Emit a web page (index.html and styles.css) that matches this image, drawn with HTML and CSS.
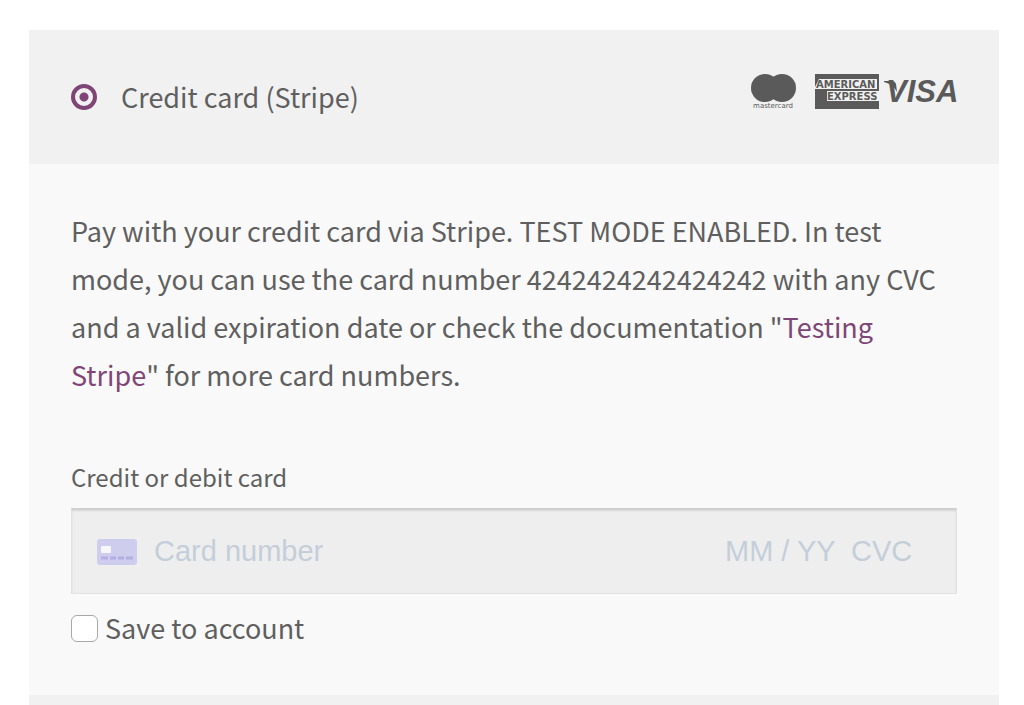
FILE: index.html
```
<!DOCTYPE html>
<html lang="en">
<head>
    <meta charset="UTF-8">
    <meta name="viewport" content="width=device-width, initial-scale=1.0">
    <title>Checkout</title>
    <link rel="stylesheet" href="styles.css">
</head>
<body>
    <form class="payment-methods">
        <div class="method-header">
            <input type="radio" id="method-stripe" name="payment_method" class="radio" checked>
            <label for="method-stripe" class="method-name">Credit card (Stripe)</label>
            <div class="card-brands">
                <svg class="brand" width="48" height="40" viewBox="0 0 48 40" role="img" aria-label="Mastercard">
                    <circle cx="15" cy="16" r="14"/>
                    <circle cx="32" cy="16" r="14"/>
                    <rect x="17" y="5" width="13" height="22"/>
                    <text x="23" y="36" class="mastercard-text">mastercard</text>
                </svg>
                <svg class="brand amex" width="64" height="40" viewBox="0 0 64 40" role="img" aria-label="American Express">
                    <rect x="0" y="2" width="64" height="35"/>
                    <path class="amex-plate" d="M4 7H62V17H0V15ZM12 19H64V29H12Z"/>
                    <text x="1" y="16" class="amex-text">AMERICAN</text>
                    <text x="12" y="28" class="amex-text">EXPRESS</text>
                </svg>
                <svg class="brand visa" width="76" height="40" viewBox="0 0 76 40" role="img" aria-label="Visa">
                    <path d="M1 9H9Q12 9 13 12L14 20Q10 12 1 10Z"/>
                    <text x="3" y="30" class="visa-text">VISA</text>
                </svg>
            </div>
        </div>

        <div class="method-body">
            <p class="description">Pay with your credit card via Stripe. TEST MODE ENABLED. In test mode, you can use the card number 4242424242424242 with any CVC and a valid expiration date or check the documentation "<a href="#">Testing Stripe</a>" for more card numbers.</p>

            <label for="card-number" class="field-label">Credit or debit card</label>
            <div class="card-field">
                <svg class="card-icon" width="40" height="26" viewBox="0 0 40 26" aria-hidden="true">
                    <rect width="40" height="26" rx="3" fill="#cfcdee"/>
                    <rect x="4" y="7" width="10" height="7" rx="1" fill="#f6f6fc"/>
                    <path d="M4 19h7M13 19h6M21 19h6M29 19h7" stroke="#b1afe4" stroke-width="3"/>
                </svg>
                <input type="text" id="card-number" class="card-number" placeholder="Card number">
                <input type="text" class="expiry" placeholder="MM / YY" aria-label="Expiration date">
                <input type="text" class="cvc" placeholder="CVC" aria-label="CVC">
            </div>

            <div class="save-row">
                <input type="checkbox" id="save-card" class="checkbox">
                <label for="save-card">Save to account</label>
            </div>
        </div>

        <div class="next-method"></div>
    </form>
</body>
</html>
```
FILE: styles.css
```
* {
    box-sizing: border-box;
}

body {
    margin: 0;
    background-color: #fff;
    color: #5f5f5f;
    font-family: "Noto Sans CJK SC", "Noto Sans", sans-serif;
    font-size: 27px;
    line-height: 48px;
}

.payment-methods {
    display: flex;
    flex-direction: column;
    min-height: 100vh;
    padding: 30px 25px 0 29px;
}

.method-header {
    display: flex;
    align-items: center;
    min-height: 134px;
    padding: 0 42px;
    background-color: #f1f1f1;
}

.next-method {
    flex: 1;
    background-color: #f1f1f1;
}

.radio {
    appearance: none;
    width: 26px;
    height: 26px;
    margin: 0 24px 0 0;
    border: 4px solid #7f4577;
    border-radius: 50%;
    background: radial-gradient(circle, #7f4577 4px, transparent 5px);
}

.card-brands {
    display: flex;
    align-items: center;
    margin: 0 0 10px auto;
}

.brand {
    fill: #5a5a5a;
}

.amex {
    margin: 0 4px 0 17px;
}

.visa {
    margin-right: -2px;
}

.mastercard-text {
    font: 7px "DejaVu Sans", sans-serif;
    text-anchor: middle;
}

.amex-plate {
    fill: #f1f1f1;
}

.amex-text {
    font: bold 10px "DejaVu Sans", sans-serif;
}

.visa-text {
    font: italic bold 31px "Liberation Sans", sans-serif;
}

.method-body {
    padding: 43px 42px;
    background-color: #f9f9f9;
}

.description {
    margin: 0 0 58px;
}

.description a {
    color: #7f4577;
    text-decoration: none;
}

.field-label {
    display: block;
    margin-bottom: 11px;
    font-size: 24px;
    line-height: 40px;
}

.card-field {
    display: flex;
    align-items: center;
    height: 86px;
    padding: 0 40px 0 25px;
    border: 1px solid #e2e2e2;
    border-top: 2px solid #d0d0d0;
    background-color: #eee;
    box-shadow: inset 0 1px 2px rgba(0, 0, 0, 0.1);
}

.card-field input {
    height: 40px;
    padding: 0;
    border: 0;
    outline: 0;
    background: none;
    color: #5f5f5f;
    font: 29px "Liberation Sans", Arial, sans-serif;
}

.card-field input::placeholder {
    color: #c4ceda;
    opacity: 1;
}

.card-icon {
    flex-shrink: 0;
    margin-right: 17px;
}

.card-field .card-number {
    flex: 1;
    min-width: 0;
}

.card-field .expiry {
    width: 126px;
}

.card-field .cvc {
    width: 65px;
}

.save-row {
    display: flex;
    align-items: center;
    margin-top: 10px;
}

.checkbox {
    appearance: none;
    width: 27px;
    height: 27px;
    margin: 0 7px 0 0;
    border: 1px solid #a8a8a8;
    border-radius: 6px;
    background-color: #fff;
}

.checkbox:checked {
    background-color: #7f4577;
}
```
